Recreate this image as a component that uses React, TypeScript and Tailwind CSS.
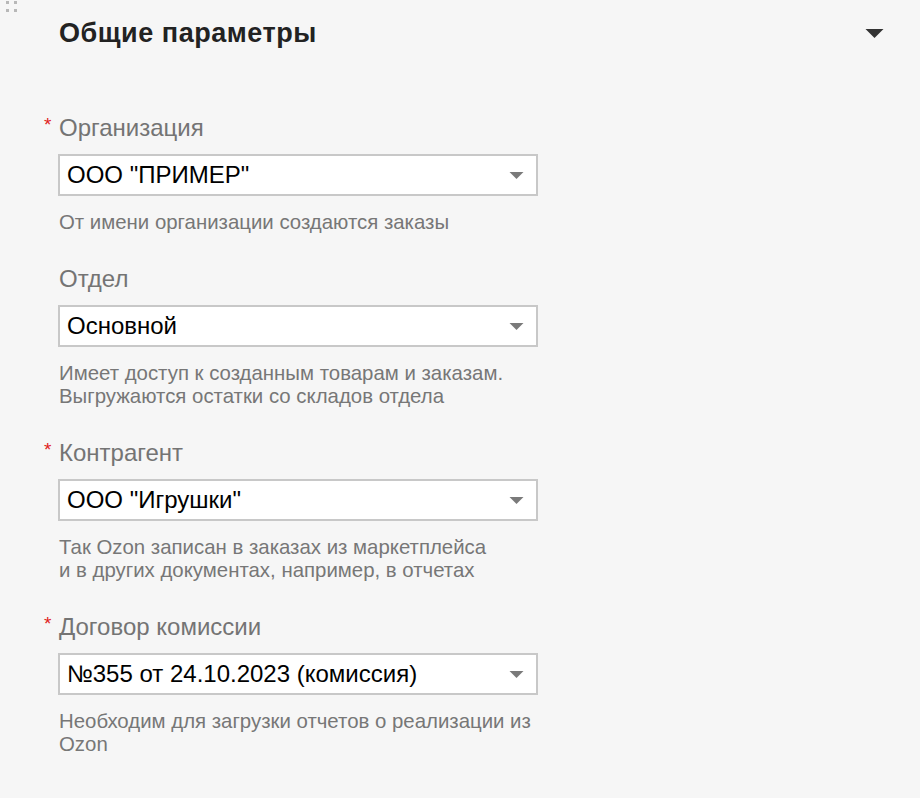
import React from "react";

interface Field {
  label: string;
  required: boolean;
  value: string;
  help: string[];
}

const fields: Field[] = [
  {
    label: "Организация",
    required: true,
    value: 'ООО "ПРИМЕР"',
    help: ["От имени организации создаются заказы"],
  },
  {
    label: "Отдел",
    required: false,
    value: "Основной",
    help: [
      "Имеет доступ к созданным товарам и заказам.",
      "Выгружаются остатки со складов отдела",
    ],
  },
  {
    label: "Контрагент",
    required: true,
    value: 'ООО "Игрушки"',
    help: [
      "Так Ozon записан в заказах из маркетплейса",
      "и в других документах, например, в отчетах",
    ],
  },
  {
    label: "Договор комиссии",
    required: true,
    value: "№355 от 24.10.2023 (комиссия)",
    help: ["Необходим для загрузки отчетов о реализации из", "Ozon"],
  },
];

function Caret({ className }: { className: string }) {
  return (
    <svg className={className} viewBox="0 0 16 8" aria-hidden="true">
      <path d="M0 0h16L8 8z" fill="currentColor" />
    </svg>
  );
}

function SelectField({ field }: { field: Field }) {
  return (
    <div className="flex flex-col">
      <div className="relative h-[28px] pl-[59px] text-[24px] leading-[28px] text-[#747474]">
        {field.required && (
          <span className="absolute left-[44px] top-[-3px] text-[19px] text-[#e0201b]">*</span>
        )}
        {field.label}
      </div>
      <div className="ml-[58px] mt-[12px] flex h-[42px] w-[480px] items-center justify-between border-2 border-[#c8c8c8] bg-white pl-[7px] pr-[12px]">
        <span className="text-[24px] leading-[28px] text-black">{field.value}</span>
        <Caret className="h-[7px] w-[15px] text-[#7a7a7a]" />
      </div>
      <div className="mt-[15px] pl-[59px] text-[20.4px] leading-[23px] text-[#777]">
        {field.help.map((line, i) => (
          <div key={i}>{line}</div>
        ))}
      </div>
    </div>
  );
}

export default function App() {
  return (
    <div
      className="relative h-[798px] w-[920px] overflow-hidden bg-[#f6f6f6]"
      style={{ fontFamily: '"Liberation Sans", Arial, sans-serif' }}
    >
      {/* drag handle */}
      <div className="absolute left-[6px] top-[1px] grid grid-cols-2 gap-[5px]">
        <span className="h-[3px] w-[3px] bg-[#b8b8b8]" />
        <span className="h-[3px] w-[3px] bg-[#b8b8b8]" />
        <span className="h-[3px] w-[3px] bg-[#b8b8b8]" />
        <span className="h-[3px] w-[3px] bg-[#b8b8b8]" />
      </div>
      <div className="flex items-center justify-between pl-[59px] pr-[36px] pt-[17px]">
        <h1 className="text-[27px] font-bold leading-[32px] tracking-[0.02em] text-[#222]">
          Общие параметры
        </h1>
        <Caret className="h-[9px] w-[19px] text-[#333]" />
      </div>
      <div className="mt-[65px] flex flex-col gap-[31px]">
        {fields.map((f) => (
          <SelectField key={f.label} field={f} />
        ))}
      </div>
    </div>
  );
}
